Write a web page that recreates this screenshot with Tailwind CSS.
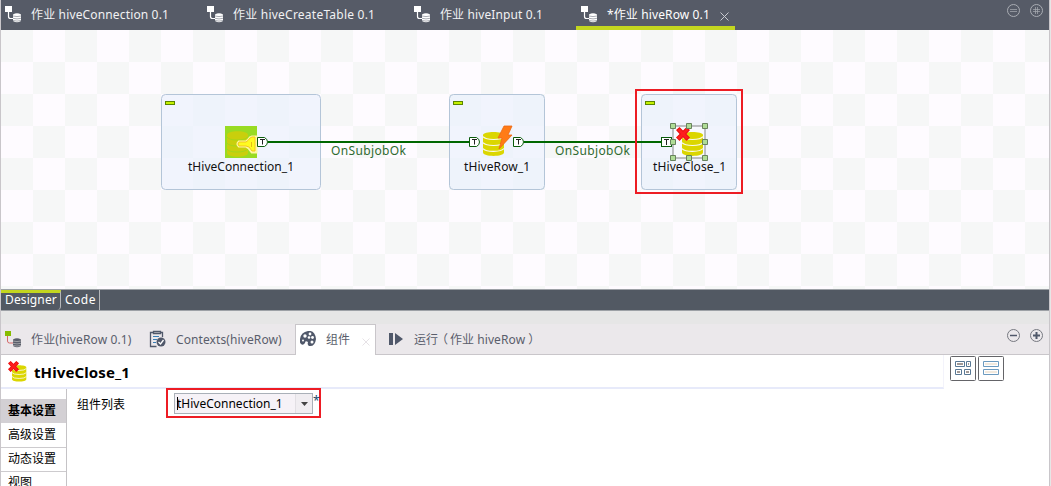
<!DOCTYPE html>
<html lang="zh">
<head>
<meta charset="utf-8">
<title>hiveRow 0.1</title>
<script src="https://cdn.jsdelivr.net/npm/@tailwindcss/browser@4"></script>
</head>
<body class="w-[1051px] h-[486px] overflow-hidden bg-[#e6e6e6] font-['Noto_Sans','Noto_Sans_CJK_SC',sans-serif] text-[12px] leading-4 text-black whitespace-nowrap">
<svg width="0" height="0" class="absolute">
  <defs>
    <symbol id="job" viewBox="0 0 17 17"><rect width="7" height="6"/><path d="M3.500 5v5.500q0 2 2 2H8" fill="none" stroke="currentColor" stroke-width="1.200"/><path d="M8 8.500q4-2.600 8 0v6.500q-4 2.500-8 0z"/><path d="M8 10q4 1.200 8 0M8 12.300q4 1.200 8 0M8 14.500q4 1.200 8 0" fill="none" stroke="#858994" stroke-width=".7"/></symbol>
    <symbol id="db" viewBox="0 0 22 25"><path d="M0 3.500C0-.5 21-.5 21 3.500V21C21 25.500 0 25.500 0 21z" fill="#dbd600"/><path d="M0 5.200q2 2.800 10.500 2.800t10.500-2.800M0 11.200q2 2.800 10.500 2.800t10.500-2.800M0 17q2 2.800 10.500 2.800t10.500-2.800" fill="none" stroke="#fbfaee" stroke-width="1.200"/></symbol>
    <symbol id="cross" viewBox="0 0 14 14"><path d="M3.500 0 7 3.500 10.500 0 14 3 10.500 7 14 10.500 10.500 14 7 10.300 3.500 14 0 10.500 3.500 7 0 3z" fill="#ff1d1d"/><path d="M3.500 1 7 4.500 10.500 1 13 3.200 9.500 7l3.500 3.500-2.500 2.500L7 9.500 3.500 13 1 10.500 4.500 7 1 3.200z" fill="none" stroke="#d81111" stroke-width=".8"/></symbol>
    <symbol id="port" viewBox="0 0 13 12"><path d="M1.500 1.500h7q3 1.500 3 4.500t-3 4.500h-7z" fill="#fff" stroke="#0a5c0a"/><path d="M4 3.500h5" fill="none" stroke="#222"/><path d="M6.500 3.500v5" fill="none" stroke="#222"/></symbol>
  </defs>
</svg>
<div class="flex h-full">
<div class="flex h-full w-[1050px] flex-col border-x border-[#c9c6ca]">
  <nav class="flex h-[30px] shrink-0 bg-[#565b67] text-[#f1f1f3]">
    <div class="flex w-[202px] pl-1 pt-1.5"><svg width="17" height="17" class="mr-[9px] text-white" fill="currentColor"><use href="#job"/></svg><span class="pt-px tracking-[0.15px]">作业 hiveConnection 0.1</span></div>
    <div class="flex w-[207px] pl-1 pt-1.5"><svg width="17" height="17" class="mr-[9px] text-white" fill="currentColor"><use href="#job"/></svg><span class="pt-px tracking-[0.23px]">作业 hiveCreateTable 0.1</span></div>
    <div class="flex w-[166px] pl-1 pt-1.5"><svg width="17" height="17" class="mr-[9px] text-white" fill="currentColor"><use href="#job"/></svg><span class="pt-px tracking-[0.12px]">作业 hiveInput 0.1</span></div>
    <div class="flex w-[159px] border-b-4 border-[#c3d61f] pl-[5px] pt-1.5 text-white"><svg width="17" height="17" class="mr-[9px]" fill="currentColor"><use href="#job"/></svg><span class="w-[113px] pt-px tracking-[0.12px]">*作业 hiveRow 0.1</span><svg width="9" height="9" class="mt-1.5" stroke="#c8cad0" fill="none"><path d="m.5.5 8 8m0-8-8 8"/></svg></div>
    <svg width="38" height="16" class="ml-auto mr-1.5 mt-[3px]" fill="none" stroke="#a9acb3"><circle cx="8.500" cy="7.500" r="6"/><path d="M5 6.500h7M5 8.500h7" stroke-opacity=".7"/><circle cx="31.500" cy="7.500" r="6"/><path d="M28 6.500h7M28 8.500h7M30.500 4v7M32.500 4v7" stroke-opacity=".7"/></svg>
  </nav>

  <main class="h-[259px] shrink-0 bg-[#fefbff]">
    <svg width="1048" height="259" viewBox="1 30 1048 259" font-family="Noto Sans, sans-serif" font-size="12">
      <defs><pattern id="check" x="1" y="30" width="64" height="64" patternUnits="userSpaceOnUse"><path d="M0 0h32v32H0zM32 32h32v32H32z" fill="#f6f7f7"/></pattern></defs>
      <rect x="1" y="30" width="1048" height="259" fill="url(#check)"/>
      <g fill="#ebf1fc" fill-opacity=".7" stroke="#b4c5d8">
        <rect x="161.500" y="94.500" width="159" height="95" rx="4"/><rect x="449.500" y="94.500" width="95" height="95" rx="4"/><rect x="641.500" y="94.500" width="95" height="95" rx="4"/>
      </g>
      <g fill="#c4f000" stroke="#5b8500"><rect x="165.500" y="101.500" width="9" height="3"/><rect x="453.500" y="101.500" width="9" height="3"/><rect x="645.500" y="101.500" width="9" height="3"/></g>
      <path d="M268 142h201M524 142h137" stroke="#006700" stroke-width="2"/>
      <rect x="225" y="126" width="32" height="32" fill="#99db22"/>
      <path d="M227 135c0-5 21-5 21 0v18c0 5-21 5-21 0z" fill="#c9cf0c"/>
      <path d="M227 137q2 3 10 3t11-3M227 143q2 3 10 3t11-3M227 149q2 3 10 3t11-3" fill="none" stroke="#a4d71a"/>
      <path d="M239 142h7q2-1 4-4l2-1h4v15h-4l-3-4-3-2h-7q-2-2 0-4z" fill="#fffb20" stroke="#fff8a0" stroke-width="3"/>
      <path d="M239 142h7q2-1 4-4l2-1h3v14h-3l-3-4-3-1h-7q-2-2 0-4z" fill="#fffb20" stroke="#f2c71d"/><path d="M251.500 142v5" stroke="#e6bd14"/>
      <use href="#port" x="256" y="136" width="13" height="12"/>
      <use href="#port" x="468" y="136" width="13" height="12"/>
      <use href="#db" x="483" y="131" width="22" height="26"/>
      <path d="M504 126h8l-4 9h4l-13 14 3-11h-4z" fill="#ff7b17" stroke="#ec6712" stroke-width=".8"/>
      <use href="#port" x="512" y="136" width="13" height="12"/>
      <rect x="661.500" y="137.500" width="10" height="9" fill="#fff" stroke="#0a5c0a"/><path d="M664 139.500h5M666.500 140v5" stroke="#222"/>
      <rect x="673" y="126" width="32" height="32" fill="#f7f9fe" stroke="#858585"/>
      <use href="#db" x="682" y="131" width="22" height="26"/><use href="#cross" x="676" y="127" width="14" height="14"/>
      <g fill="#afdc96" stroke="#68835d"><path d="M670.500 123.500h5v5h-5zM686.500 123.500h5v5h-5zM702.500 123.500h5v5h-5zM670.500 139.500h5v5h-5zM702.500 139.500h5v5h-5zM670.500 155.500h5v5h-5zM686.500 155.500h5v5h-5zM702.500 155.500h5v5h-5z"/></g>
      <g fill="#111"><text x="188" y="171" textLength="106">tHiveConnection_1</text><text x="464" y="171" textLength="66">tHiveRow_1</text><text x="653" y="171" textLength="73">tHiveClose_1</text></g>
      <g fill="#2f6b2f"><text x="331" y="155" textLength="75">OnSubjobOk</text><text x="555" y="155" textLength="75">OnSubjobOk</text></g>
      <rect x="636" y="90" width="106" height="103" fill="none" stroke="#ed1c24" stroke-width="2"/>
    </svg>
  </main>

  <div class="flex h-[22px] shrink-0 border-y border-[#9da1a6] bg-[#525963] text-white">
    <div class="w-[60px] rounded-br-sm border-r border-t-[3px] border-r-[#b5b7ba] border-t-[#c3d61f] pl-1 leading-[14px] tracking-[0.12px]">Designer</div>
    <div class="w-[39px] border-r border-[#b5b7ba] pl-1 pt-[3px] leading-[14px] tracking-[0.5px]">Code</div>
  </div>

  <nav class="mt-[13px] flex h-[31px] shrink-0 border-b border-[#c9c6ca] bg-[#ebe8eb] text-[#5a5e6b]">
    <div class="flex w-[144px] pl-1 pt-[7px]"><svg width="17" height="17" class="mr-[9px]"><rect width="6" height="5" fill="#86bc00"/><path d="M2.500 5v5q0 2 2 2H8" stroke="#d56969" fill="none"/><path d="M8 8.500q4-2.600 8 0v6.500q-4 2.500-8 0z" fill="#5a5e6b"/><path d="M8 10q4 1.200 8 0M8 12.300q4 1.200 8 0M8 14.500q4 1.200 8 0" fill="none" stroke="#bbb" stroke-width=".7"/></svg><span class="pt-px tracking-[0.13px]">作业(hiveRow 0.1)</span></div>
    <div class="flex w-[150px] pl-1 pt-1.5"><svg width="18" height="18" class="mr-[9px]" fill="none"><path d="M4.500 2.500h-3v14h6M11 2.500h2.500V7M4.500 1.500h7v2h-7z" stroke="#50586a" stroke-width="1.300"/><path d="M4 6.500h6M4 9.500h4M4 12.500h3" stroke="#397eb5"/><circle cx="12" cy="12" r="4.500" fill="#50586a"/><path d="m9.500 12 2 2 3-4" stroke="#fff" stroke-width="1.300"/></svg><span class="pt-0.5 tracking-[0.1px]">Contexts(hiveRow)</span></div>
    <div class="-mb-px flex w-[81px] border border-b-0 border-[#c9c6ca] bg-white pl-1 pt-1.5"><svg width="17" height="17" class="mr-[9px]"><path d="M0 8Q1 1 8 0t8 8q-1 8-7 7-2-1-1-4-3-2-3 1-2 3-4 1-2-2-1-5z" fill="#50586a"/><g fill="#fff"><circle cx="5" cy="5" r="1.700"/><circle cx="10" cy="3" r="1.400"/><circle cx="9" cy="6.500" r="1.300"/><circle cx="12.500" cy="6.500" r="1.400"/><circle cx="12" cy="11" r="1.500"/><circle cx="3" cy="9.500" r="1"/></g></svg><span class="w-[36px] pt-px">组件</span><svg width="8" height="8" class="mt-[7px]" stroke="#e6e2e6" fill="none"><path d="m.5.5 7 7m0-7-7 7"/></svg></div>
    <div class="flex pl-[13px] pt-2"><svg width="14" height="14" class="mr-[11px] mt-px" fill="#50586a"><path d="M0 0h4v12H0zM6 0l8 6-8 6z"/></svg><span>运行<span class="-ml-[2px]">（</span><span class="ml-[2px]">作业 </span><span class="tracking-[0.12px]">hiveRow</span><span class="ml-[3px]">）</span></span></div>
    <svg width="38" height="16" class="ml-auto mr-1.5 mt-1" fill="none" stroke="#777981"><circle cx="8.500" cy="7.500" r="6"/><path d="M5 7.500h7" stroke="#50586a" stroke-width="1.500"/><circle cx="31.500" cy="7.500" r="6"/><path d="M28 7.500h7M31.500 4v7" stroke="#50586a" stroke-width="2"/></svg>
  </nav>

  <section class="flex grow flex-col overflow-hidden bg-white">
    <header class="flex h-[34px] shrink-0">
      <div class="flex w-[943px] border-b-2 border-r border-[#e7eafa] border-r-[#f3f3fb] pl-[7px] pt-1.5"><svg width="21" height="22" class="mr-[5px]"><use href="#db" x="3" y="4" width="17" height="17"/><use href="#cross" width="11" height="11"/></svg><h1 class="pt-[3px] text-[15px] font-bold leading-4 tracking-[0.1px]">tHiveClose_1</h1></div>
      <svg width="54" height="26" class="ml-1.5 mt-px" fill="#fff" stroke="#646468"><rect x=".5" y=".5" width="25" height="24" rx="1"/><rect x="28.500" y=".5" width="25" height="24" rx="1"/><g stroke="#587895"><path d="M5.500 5.500h9v5h-9zM16.500 5.500h4v5h-4zM5.500 13.500h6v5h-6zM14.500 13.500h6v5h-6z"/></g><path d="M7 8h6M18 8h1M7 16h3M16 16h3" stroke="#a39a96" stroke-width="2"/><path d="M33.500 5.500h15v5h-15zM33.500 13.500h15v5h-15z" stroke="#6c9abf"/><path d="M35 8h12M35 16h12" stroke="#f2e9dd" stroke-width="2"/></svg>
    </header>
    <div class="flex grow">
      <aside class="w-[66px] border-r border-[#c5c3c6] pt-2.5">
        <div class="h-6 bg-[#d3d0d4] pl-[7px] pt-1 font-bold">基本设置</div>
        <div class="h-[25px] border-b border-[#cdcbce] pl-[7px] pt-1">高级设置</div>
        <div class="h-6 border-b border-[#cdcbce] pl-[7px] pt-[3px]">动态设置</div>
        <div class="pl-[7px] pt-[3px]">视图</div>
      </aside>
      <div class="flex pl-2.5">
        <label class="w-[89px] pt-2">组件列表</label>
        <div class="-mt-px flex h-[30px] w-[155px] border-2 border-[#ed1c24] pl-[6px] pt-[3px]">
          <div class="flex h-[21px] w-[139px] shrink-0 border border-[#aab0b8] bg-[#f6f2f7]"><div class="my-[3px] ml-0.5 w-[118px] border-l border-black leading-[14px]"><span class="-ml-px">tHiveConnection_1</span></div><div class="grow border-l border-[#e2dfe4] bg-[#f0edf1] pl-[5px] pt-2"><svg width="7" height="4"><path d="M0 0h7L3.500 4z" fill="#444"/></svg></div></div><span class="text-[#23496b]">*</span>
        </div>
      </div>
    </div>
  </section>
</div>
</div>
</body>
</html>
